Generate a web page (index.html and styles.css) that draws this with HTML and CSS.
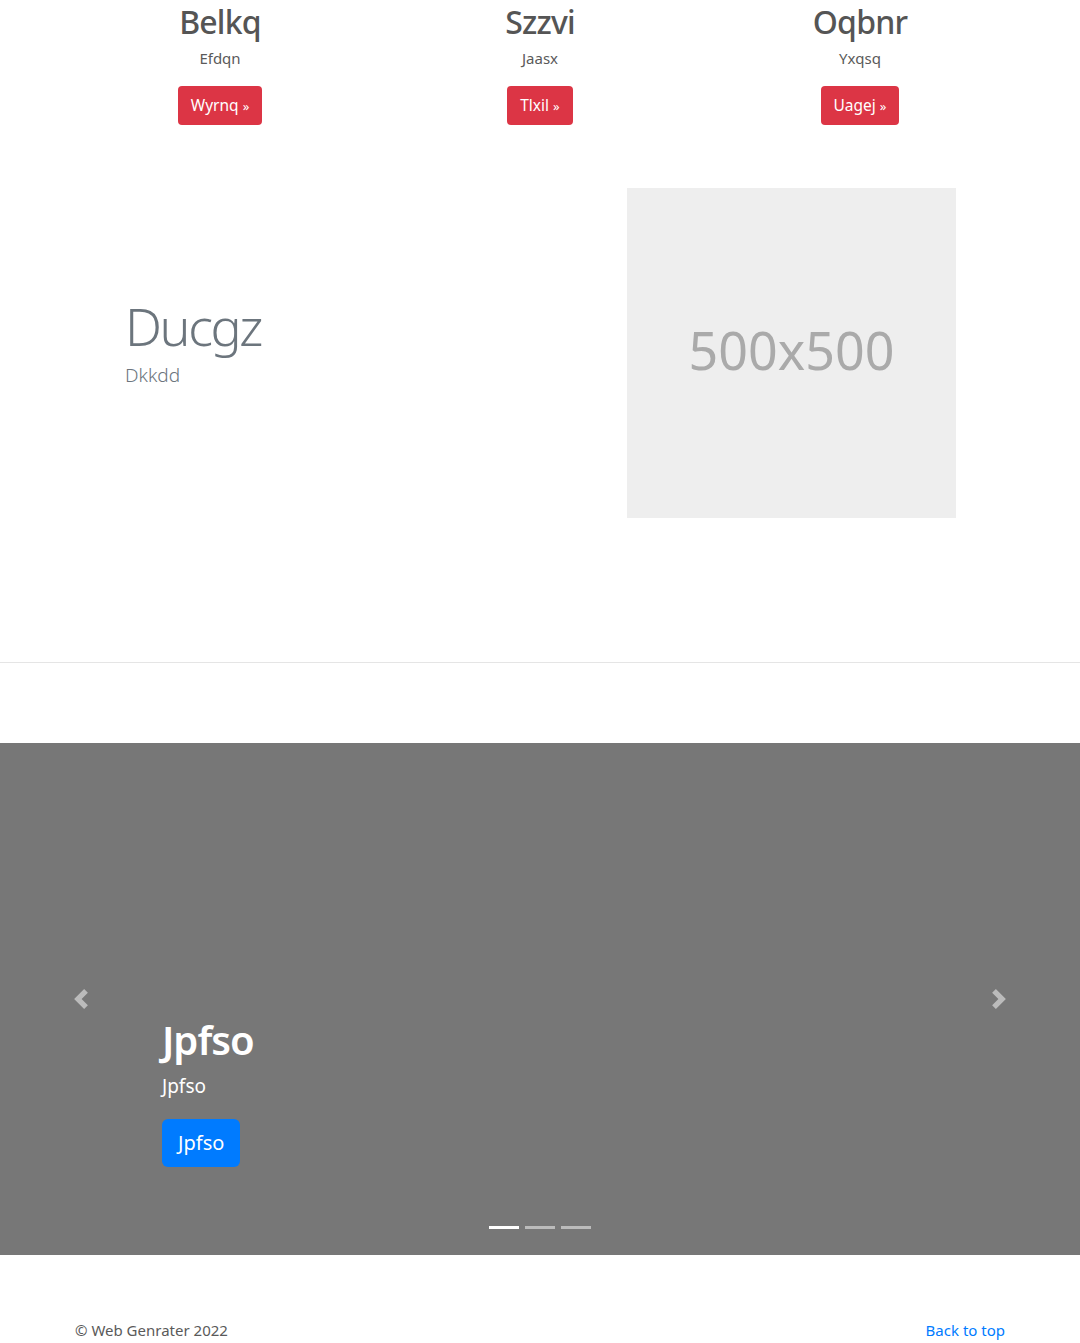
FILE: index.html
```html
<!DOCTYPE html>
<html lang="en">
<head>
<meta charset="utf-8">
<title>Page</title>
<link rel="stylesheet" href="styles.css">
</head>
<body>
<main>
  <div class="container marketing">
    <div class="cols">
      <div class="col">
        <h2>Belkq</h2>
        <p>Efdqn</p>
        <p><a class="btn btn-danger" href="#">Wyrnq <span class="raq">&raquo;</span></a></p>
      </div>
      <div class="col">
        <h2>Szzvi</h2>
        <p>Jaasx</p>
        <p><a class="btn btn-danger" href="#">Tlxil <span class="raq">&raquo;</span></a></p>
      </div>
      <div class="col">
        <h2>Oqbnr</h2>
        <p>Yxqsq</p>
        <p><a class="btn btn-danger" href="#">Uagej <span class="raq">&raquo;</span></a></p>
      </div>
    </div>

    <div class="featurette">
      <div class="feat-text">
        <h2 class="featurette-heading">Ducgz</h2>
        <p class="lead">Dkkdd</p>
      </div>
      <div class="feat-img">500x500</div>
    </div>
  </div>

  <hr class="divider">

  <div class="carousel">
    <a class="ctrl ctrl-prev" href="#">
      <svg width="20" height="20" viewBox="0 0 8 8"><path fill="#fff" d="M5.25 0l-4 4 4 4 1.5-1.5L4.25 4l2.5-2.5L5.25 0z"/></svg>
    </a>
    <div class="caption">
      <h1>Jpfso</h1>
      <p class="sub">Jpfso</p>
      <p><a class="btn btn-lg btn-primary" href="#">Jpfso</a></p>
    </div>
    <a class="ctrl ctrl-next" href="#">
      <svg width="20" height="20" viewBox="0 0 8 8"><path fill="#fff" d="M2.75 0l-1.5 1.5L3.75 4l-2.5 2.5L2.75 8l4-4-4-4z"/></svg>
    </a>
    <ol class="indicators">
      <li class="active"></li>
      <li></li>
      <li></li>
    </ol>
  </div>

  <footer class="container footer">
    <p class="copy">&copy; Web Genrater 2022</p>
    <p class="back"><a href="#">Back to top</a></p>
  </footer>
</main>
</body>
</html>
```

FILE: styles.css
```css
* { box-sizing: border-box; }
html, body { margin: 0; padding: 0; }
body {
  font-family: "Noto Sans", "Open Sans", sans-serif;
  font-size: 16px;
  line-height: 1.5;
  color: #5a5a5a;
  background: #fff;
}
p { margin: 0 0 16px; }
a { text-decoration: none; }

.container {
  width: 960px;
  margin: 0 auto;
  padding: 0 15px;
}

.cols {
  display: flex;
  margin: 0 -15px;
}
.col {
  flex: 0 0 320px;
  padding: 0 15px;
  text-align: center;
  margin-bottom: 24px;
}
.col h2 {
  font-size: 32px;
  font-weight: 500;
  line-height: 1.2;
  letter-spacing: -0.8px;
  margin: 3px 0 5px;
  color: #555;
}
.col p { margin-left: 12px; margin-right: 12px; font-size: 15px; line-height: 24px; }

.btn {
  display: inline-block;
  font-size: 16px;
  line-height: 24px;
  padding: 7px 12px;
  border-radius: 4px;
  border: 0;
  color: #fff;
}
.col .btn { padding-left: 13px; padding-right: 13px; font-size: 15.5px; }
.btn-danger { background: #dc3545; }
.raq { font-size: 13px; }
.btn-primary { background: #007bff; }
.btn-lg {
  font-size: 20px;
  line-height: 30px;
  padding: 9px 16px;
  border-radius: 6px;
}

.featurette {
  display: flex;
  align-items: center;
  margin-top: 23px;
  padding-bottom: 64px;
}
.feat-text {
  width: 552px;
  padding-left: 50px;
  padding-bottom: 16px;
}
.featurette-heading {
  font-size: 52px;
  font-weight: 300;
  line-height: 1;
  letter-spacing: -2.4px;
  margin: 0 0 8px;
  color: #6c757d;
}
.lead {
  font-size: 19px;
  line-height: 30px;
  font-weight: 300;
  color: #6c757d;
  margin: 0;
}
.feat-img {
  width: 329px;
  height: 330px;
  background: #eee;
  color: #aaa;
  font-size: 52px;
  display: flex;
  align-items: center;
  justify-content: center;
  padding-bottom: 6px;
}

.divider {
  margin: 80px 0;
  border: 0;
  border-top: 1px solid rgba(0,0,0,.1);
  height: 0;
}

.carousel {
  position: relative;
  height: 512px;
  background: #777;
  margin-bottom: 64px;
}
.ctrl {
  position: absolute;
  top: 0;
  bottom: 0;
  width: 15%;
  display: flex;
  align-items: center;
  justify-content: center;
  opacity: .5;
}
.ctrl-prev { left: 0; }
.ctrl-next { right: 0; }
.caption {
  position: absolute;
  left: 15%;
  right: 15%;
  bottom: 52px;
  padding-bottom: 20px;
  color: #fff;
}
.caption h1 {
  font-size: 40px;
  font-weight: 600;
  line-height: 1.2;
  letter-spacing: -1px;
  margin: 0 0 8px;
}
.caption p { font-size: 19px; }
.caption .sub { margin-bottom: 19px; }
.caption .btn { font-size: 20px; }
.indicators {
  position: absolute;
  left: 0;
  right: 0;
  bottom: 26px;
  margin: 0;
  padding: 0;
  list-style: none;
  display: flex;
  justify-content: center;
  gap: 6px;
}
.indicators li {
  width: 30px;
  height: 3px;
  background: rgba(255,255,255,.5);
}
.indicators li.active { background: #fff; }

.footer {
  display: flex;
  justify-content: space-between;
  font-size: 15px;
}
.footer p { margin: 0; }
.back a { color: #007bff; }
```
